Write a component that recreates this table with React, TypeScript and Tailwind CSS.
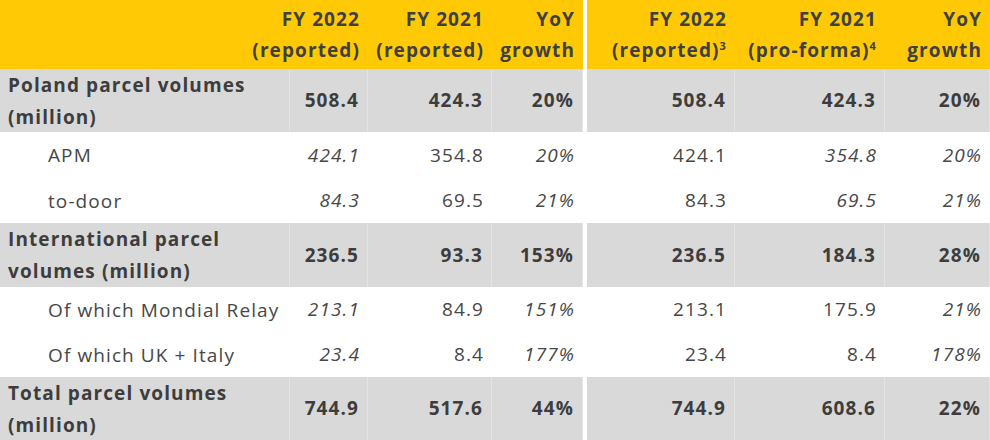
import React from "react";

type Cell = { v: string; i?: boolean };
type Row = { label: string[]; bold: boolean; h: string; left: Cell[]; right: Cell[] };

const rows: Row[] = [
  {
    label: ["Poland parcel volumes", "(million)"],
    bold: true,
    h: "h-[63px]",
    left: [{ v: "508.4" }, { v: "424.3" }, { v: "20%" }],
    right: [{ v: "508.4" }, { v: "424.3" }, { v: "20%" }],
  },
  {
    label: ["APM"],
    bold: false,
    h: "h-[46px]",
    left: [{ v: "424.1", i: true }, { v: "354.8" }, { v: "20%", i: true }],
    right: [{ v: "424.1" }, { v: "354.8", i: true }, { v: "20%", i: true }],
  },
  {
    label: ["to-door"],
    bold: false,
    h: "h-[45px]",
    left: [{ v: "84.3", i: true }, { v: "69.5" }, { v: "21%", i: true }],
    right: [{ v: "84.3" }, { v: "69.5", i: true }, { v: "21%", i: true }],
  },
  {
    label: ["International parcel", "volumes (million)"],
    bold: true,
    h: "h-[64px]",
    left: [{ v: "236.5" }, { v: "93.3" }, { v: "153%" }],
    right: [{ v: "236.5" }, { v: "184.3" }, { v: "28%" }],
  },
  {
    label: ["Of which Mondial Relay"],
    bold: false,
    h: "h-[45px]",
    left: [{ v: "213.1", i: true }, { v: "84.9" }, { v: "151%", i: true }],
    right: [{ v: "213.1" }, { v: "175.9" }, { v: "21%", i: true }],
  },
  {
    label: ["Of which UK + Italy"],
    bold: false,
    h: "h-[45px]",
    left: [{ v: "23.4", i: true }, { v: "8.4" }, { v: "177%", i: true }],
    right: [{ v: "23.4" }, { v: "8.4" }, { v: "178%", i: true }],
  },
  {
    label: ["Total parcel volumes", "(million)"],
    bold: true,
    h: "h-[63px]",
    left: [{ v: "744.9" }, { v: "517.6" }, { v: "44%" }],
    right: [{ v: "744.9" }, { v: "608.6" }, { v: "22%" }],
  },
];

const cols = "grid grid-cols-[290px_78px_124px_91px_4px_148px_150px_105px]";

const Header: React.FC = () => {
  const heads: React.ReactNode[][] = [
    ["FY 2022", "(reported)"],
    ["FY 2021", "(reported)"],
    ["YoY", "growth"],
  ];
  const headsR: React.ReactNode[][] = [
    ["FY 2022", <>(reported)<sup className="text-[11px] -top-[7px]">3</sup></>],
    ["FY 2021", <>(pro-forma)<sup className="text-[11px] -top-[7px]">4</sup></>],
    ["YoY", "growth"],
  ];
  const cell = (h: React.ReactNode[], k: string) => (
    <div key={k} className="bg-[#ffca05] h-[69px] flex flex-col items-end justify-center pr-[8px] font-bold leading-[31px] whitespace-nowrap text-[#404040]">
      <div>{h[0]}</div>
      <div>{h[1]}</div>
    </div>
  );
  return (
    <div className={cols}>
      <div className="bg-[#ffca05] h-[69px]" />
      {heads.map((h, i) => cell(h, "l" + i))}
      <div className="bg-white" />
      {headsR.map((h, i) => cell(h, "r" + i))}
    </div>
  );
};

const App: React.FC = () => {
  return (
    <div className="w-[990px] h-[440px] overflow-hidden bg-white text-[#3d3d3d] text-[19px] tracking-[1.1px] font-['Open_Sans',sans-serif]">
      <Header />
      {rows.map((r) => {
        const bg = r.bold ? "bg-[#d9d9d9]" : "bg-white";
        const num = (c: Cell, k: string) => (
          <div
            key={k}
            className={`${bg} ${r.h} flex items-center justify-end pr-[8px] ${r.bold ? "font-bold border-r border-[#e4e4e4]" : "text-[#474747]"} ${c.i ? "italic" : ""}`}
          >
            {c.v}
          </div>
        );
        return (
          <div key={r.label.join(" ")} className={cols}>
            <div
              className={`${bg} ${r.h} flex flex-col justify-center leading-[32px] whitespace-nowrap ${
                r.bold ? "font-bold pl-[8px] border-r border-[#e4e4e4]" : "pl-[48px] text-[#474747]"
              }`}
            >
              {r.label.map((l) => (
                <div key={l}>{l}</div>
              ))}
            </div>
            {r.left.map((c, i) => num(c, "l" + i))}
            <div className="bg-white" />
            {r.right.map((c, i) => num(c, "r" + i))}
          </div>
        );
      })}
    </div>
  );
};

export default App;
